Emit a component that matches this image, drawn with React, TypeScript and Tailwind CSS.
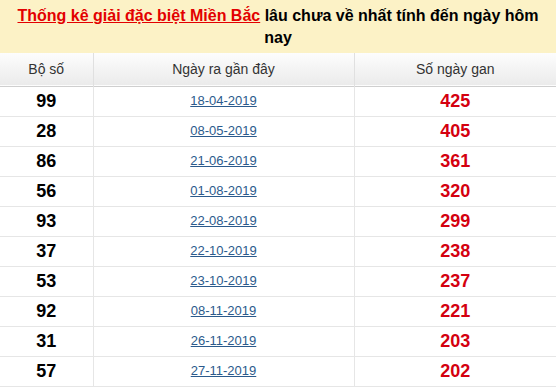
import React from 'react';

const rows: [string, string, number][] = [
    ['99', '18-04-2019', 425],
    ['28', '08-05-2019', 405],
    ['86', '21-06-2019', 361],
    ['56', '01-08-2019', 320],
    ['93', '22-08-2019', 299],
    ['37', '22-10-2019', 238],
    ['53', '23-10-2019', 237],
    ['92', '08-11-2019', 221],
    ['31', '26-11-2019', 203],
    ['57', '27-11-2019', 202],
];

export default function App() {
    return (
        <div className="w-[556px] bg-white font-['Liberation_Sans',Arial,sans-serif]">
            <table className="w-full border-collapse">
                <caption className="bg-[#fcf2c6] h-[53px] px-4 pt-[5px] text-[16px] leading-[22px] font-bold text-black text-center">
                    <a href="#" className="text-[#e30000] underline">Thống kê giải đặc biệt Miền Bắc</a> lâu chưa về nhất tính đến ngày hôm nay
                </caption>
                <thead>
                    <tr className="h-[33px] bg-gradient-to-b from-[#fdfdfd] to-[#ebebeb] border-b border-[#cfcfcf]">
                        <th className="w-[93px] font-normal text-[14px] text-[#333] border-r border-[#e0e0e0]">Bộ số</th>
                        <th className="w-[261px] font-normal text-[14px] text-[#333] border-r border-[#e0e0e0]">Ngày ra gần đây</th>
                        <th className="font-normal text-[14px] text-[#333]">Số ngày gan</th>
                    </tr>
                </thead>
                <tbody>
                    {rows.map(([num, date, gan]) => (
                        <tr key={num} className="h-[30px] border-b border-[#e6e6e6]">
                            <td className="text-center text-[18px] font-bold text-black border-r border-[#e6e6e6]">{num}</td>
                            <td className="text-center text-[13px] border-r border-[#e6e6e6]">
                                <a href="#" className="text-[#2b5a8c] underline">{date}</a>
                            </td>
                            <td className="text-center text-[18px] font-bold text-[#d4000f]">{gan}</td>
                        </tr>
                    ))}
                </tbody>
            </table>
        </div>
    );
}
